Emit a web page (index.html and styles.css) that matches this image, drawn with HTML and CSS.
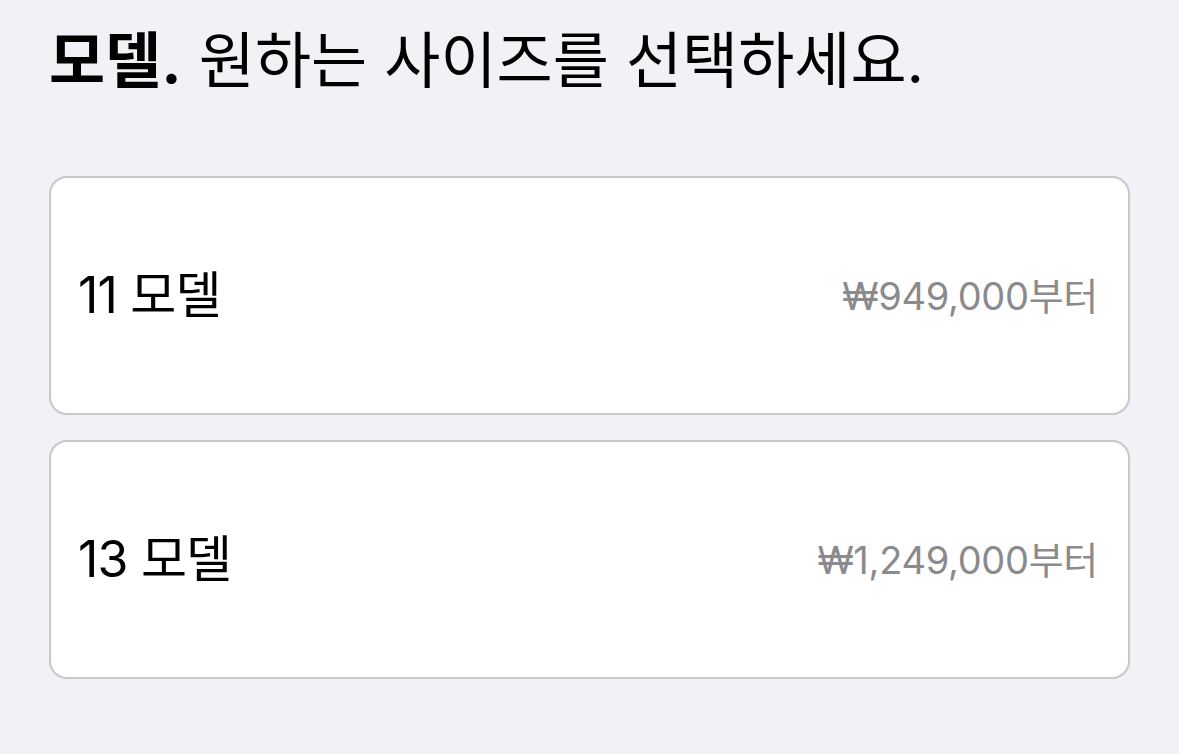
FILE: index.html
```html
<!DOCTYPE html>
<html lang="ko">
<head>
	<meta charset="UTF-8">
	<title>모델 선택</title>
	<link rel="stylesheet" href="styles.css">
</head>
<body>
	<div class="page">
		<h1 class="title"><b>모델.</b> 원하는 사이즈를 선택하세요.</h1>
		<ul class="models">
			<li class="model">
				<span class="name">11 모델</span>
				<span class="price">₩949,000부터</span>
			</li>
			<li class="model">
				<span class="name">13 모델</span>
				<span class="price">₩1,249,000부터</span>
			</li>
		</ul>
	</div>
</body>
</html>
```
FILE: styles.css
```css
html, body{
	margin: 0;
	padding: 0;
	background: #f2f1f6;
}

.page{
	padding: 16px 49px;
	font-family: Inter, "Noto Sans CJK KR", sans-serif;
	color: #000;
}

.title{
	margin: 0;
	font-size: 61px;
	font-weight: 400;
	line-height: 90px;
}

.title b{
	font-weight: 700;
}

.models{
	list-style: none;
	margin: 70px 0 0;
	padding: 0;
	display: flex;
	flex-direction: column;
	gap: 25px;
}

.model{
	height: 235px;
	background: #fff;
	border: 2px solid #c8c7cc;
	border-radius: 18px;
	display: flex;
	align-items: center;
	justify-content: space-between;
	padding: 0 30px 0 27px;
}

.name{
	font-size: 50px;
	letter-spacing: -0.8px;
	margin-top: -9px;
}

.price{
	font-size: 38px;
	color: #8a8a8f;
	letter-spacing: -0.3px;
	margin-top: -5px;
}
```
